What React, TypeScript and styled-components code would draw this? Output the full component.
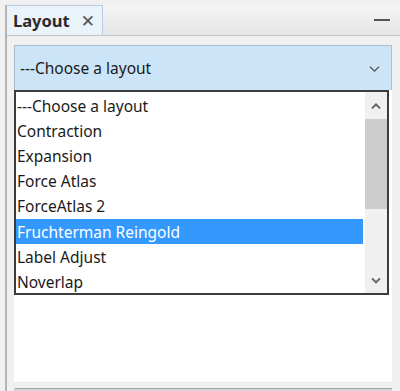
import React from 'react';
import styled, {createGlobalStyle} from 'styled-components';

const GlobalStyle = createGlobalStyle`
	html, body {
		margin: 0;
		padding: 0;
		background: #f0f0f0;
	}
	body {
		font-family: "Noto Sans", "Open Sans", "DejaVu Sans", sans-serif;
	}
`;

const layouts = [
	'---Choose a layout',
	'Contraction',
	'Expansion',
	'Force Atlas',
	'ForceAtlas 2',
	'Fruchterman Reingold',
	'Label Adjust',
	'Noverlap',
];

const selectedLayout = 'Fruchterman Reingold';

const Window = styled.div`
	width: 400px;
	height: 391px;
	box-sizing: border-box;
	padding: 5px 0 0 5px;
	background: #f0f0f0;
	display: flex;
	flex-direction: column;
	overflow: hidden;
`;

const Frame = styled.div`
	height: 386px;
	display: flex;
	flex-direction: column;
	border-left: 2px solid #b4b4b4;
	box-sizing: border-box;
`;

const Header = styled.div`
	height: 31px;
	flex: none;
	display: flex;
	align-items: stretch;
	background: linear-gradient(#f4f4f4, #e6e6e6);
	border-bottom: 1px solid #c4c4c4;
	box-sizing: border-box;
`;

const Tab = styled.div`
	width: 96px;
	box-sizing: border-box;
	display: flex;
	align-items: center;
	gap: 11px;
	padding-left: 6px;
	background: #eaf2fa;
	border: 1px solid #b8cde2;
	border-left: none;
	border-bottom: none;
	font-weight: 700;
	font-size: 16.5px;
	color: #2a2a2a;
`;

const Close = styled.span`
	font-weight: 400;
	font-size: 17px;
	color: #555;
	line-height: 1;
`;

const HeaderFill = styled.div`
	flex: 1;
	display: flex;
	align-items: center;
	justify-content: flex-end;
	padding-right: 10px;
`;

const Minimize = styled.div`
	width: 16px;
	height: 2px;
	background: #555;
`;

const Body = styled.div`
	height: 355px;
	flex: none;
	box-sizing: border-box;
	padding: 9px 8px 0 7px;
	background: #f0f0f0;
	display: flex;
	flex-direction: column;
`;

const Content = styled.div`
	height: 338px;
	flex: none;
	box-sizing: border-box;
	background: #fff;
	display: flex;
	flex-direction: column;
	border-bottom: 1px solid #e8e8e8;
`;

const NextPanelEdge = styled.div`
	height: 3px;
	margin-top: 5px;
	border-top: 1px solid #a4a4a4;
	background: #d4d4d4;
	border-top-left-radius: 2px;
`;

const Combo = styled.div`
	height: 45px;
	flex: none;
	box-sizing: border-box;
	background: #cce4f7;
	border: 1px solid #a7bfd4;
	border-bottom: none;
	display: flex;
	align-items: center;
	justify-content: space-between;
	padding: 0 10px 0 5px;
	font-size: 15.5px;
	color: #1a1a1a;
`;

const ListBox = styled.div`
	height: 205px;
	width: 375px;
	flex: none;
	box-sizing: border-box;
	border: 2px solid #3c3c3c;
	display: flex;
	background: #fff;
`;

const Items = styled.div`
	flex: 1;
	padding-top: 1px;
	padding-right: 2px;
`;

const Item = styled.div<{$selected?: boolean}>`
	height: 25.2px;
	display: flex;
	align-items: center;
	padding-left: 1px;
	font-size: 15.5px;
	color: ${({$selected}) => ($selected ? '#fff' : '#1a1a1a')};
	background: ${({$selected}) => ($selected ? '#3399ff' : 'transparent')};
`;

const ScrollBar = styled.div`
	width: 22px;
	background: #f0f0f0;
	display: flex;
	flex-direction: column;
	align-items: center;
`;

const ArrowButton = styled.div`
	height: 27px;
	width: 100%;
	display: flex;
	align-items: center;
	justify-content: center;
`;

const Thumb = styled.div`
	width: 100%;
	height: 90px;
	background: #cdcdcd;
`;

const Track = styled.div`
	flex: 1;
`;

const Chevron = ({up, size = 10, color = '#606060', width = 2}: {up?: boolean; size?: number; color?: string; width?: number}) => (
	<svg width={size + 4} height={size} viewBox="0 0 14 10">
		<path
			d={up ? 'M2 8 L7 3 L12 8' : 'M2 3 L7 8 L12 3'}
			fill="none"
			stroke={color}
			strokeWidth={width}
		/>
	</svg>
);

export default function App() {
	return (
		<Window>
			<GlobalStyle />
			<Frame>
				<Header>
					<Tab>
						Layout <Close>✕</Close>
					</Tab>
					<HeaderFill>
						<Minimize />
					</HeaderFill>
				</Header>
				<Body>
					<Content>
						<Combo>
							<span>---Choose a layout</span>
							<Chevron size={9} width={1.4} color="#555" />
						</Combo>
						<ListBox>
							<Items>
								{layouts.map((l) => (
									<Item key={l} $selected={l === selectedLayout}>
										{l}
									</Item>
								))}
							</Items>
							<ScrollBar>
								<ArrowButton>
									<Chevron up size={8} width={2.4} />
								</ArrowButton>
								<Thumb />
								<Track />
								<ArrowButton>
									<Chevron size={8} width={2.4} />
								</ArrowButton>
							</ScrollBar>
						</ListBox>
					</Content>
					<NextPanelEdge />
				</Body>
			</Frame>
		</Window>
	);
}
